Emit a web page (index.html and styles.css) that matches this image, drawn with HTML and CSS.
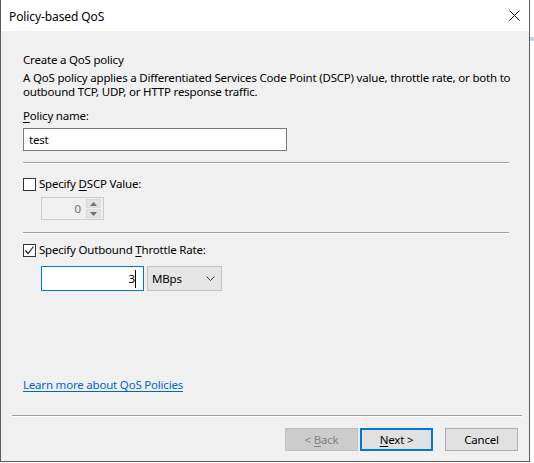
FILE: index.html
```html
<!DOCTYPE html>
<html>
<head>
<meta charset="utf-8">
<link rel="stylesheet" href="styles.css">
</head>
<body>
<div class="screen">
  <div class="window">
    <div class="titlebar">
      <span class="title">Policy-based QoS</span>
      <svg class="close" width="11" height="11" viewBox="0 0 11 11"><path d="M0.5 0.5 L10.5 10.5 M10.5 0.5 L0.5 10.5" stroke="#000" stroke-width="1" fill="none"/></svg>
    </div>
    <div class="body">
      <div class="page">
        <div class="heading">Create a QoS policy</div>
        <div class="desc">A QoS policy applies a Differentiated Services Code Point (DSCP) value, throttle rate, or both to<br>outbound TCP, UDP, or HTTP response traffic.</div>
        <div class="label"><u>P</u>olicy name:</div>
        <div class="textbox name-box">test</div>
        <div class="sep"></div>
        <div class="check-row first">
          <span class="checkbox"></span>
          <span class="check-label">Specify <u>D</u>SCP Value:</span>
        </div>
        <div class="spin">
          <span class="spin-value">0</span>
          <span class="spin-buttons">
            <span class="spin-btn"><svg width="7" height="4" viewBox="0 0 7 4"><path d="M0 4 L3.5 0 L7 4 Z" fill="#6d6d6d"/></svg></span>
            <span class="spin-btn"><svg width="7" height="4" viewBox="0 0 7 4"><path d="M0 0 L3.5 4 L7 0 Z" fill="#6d6d6d"/></svg></span>
          </span>
        </div>
        <div class="sep second"></div>
        <div class="check-row">
          <span class="checkbox"><svg width="11" height="11" viewBox="0 0 11 11"><path d="M1.5 5.5 L4 8.5 L9.5 1.5" stroke="#222" stroke-width="1.2" fill="none"/></svg></span>
          <span class="check-label">Specify Outbound <u>T</u>hrottle Rate:</span>
        </div>
        <div class="rate-row">
          <div class="textbox rate-box focused"><span class="rate-value">3</span><span class="caret"></span></div>
          <div class="select"><span>MBps</span><svg width="9" height="5" viewBox="0 0 9 5"><path d="M0.5 0.5 L4.5 4.5 L8.5 0.5" stroke="#333" stroke-width="1" fill="none"/></svg></div>
        </div>
        <a class="link">Learn more about QoS Policies</a>
      </div>
      <div class="footer">
        <div class="sep wide"></div>
        <div class="buttons">
          <button class="btn disabled">&lt; <u>B</u>ack</button>
          <button class="btn default"><u>N</u>ext &gt;</button>
          <button class="btn cancel">Cancel</button>
        </div>
      </div>
    </div>
  </div>
  <div class="behind"><div class="behind-bar"></div></div>
</div>
</body>
</html>
```
FILE: styles.css
```css
* { box-sizing: border-box; }
html, body { margin: 0; padding: 0; background: #ffffff; }
body {
  font-family: "Noto Sans", "Open Sans", sans-serif;
  font-size: 11.5px;
  letter-spacing: -0.2px;
  color: #000;
}
.screen { display: flex; width: 534px; height: 463px; overflow: hidden; }
.window {
  width: 530px;
  height: 462px;
  border-left: 1px solid #5c5c5c;
  border-right: 1px solid #5c5c5c;
  border-bottom: 1px solid #5c5c5c;
  display: flex;
  flex-direction: column;
  flex-shrink: 0;
}
.titlebar {
  height: 31px;
  background: #fff;
  display: flex;
  align-items: center;
  padding-left: 8px;
  padding-right: 9px;
}
.title { flex: 1; line-height: 15px; padding-top: 1px; font-size: 12px; letter-spacing: -0.1px; }
.close { display: block; }
.body {
  flex: 1;
  background: #f0f0f0;
  display: flex;
  flex-direction: column;
}
.page {
  flex: 1;
  display: flex;
  flex-direction: column;
  align-items: flex-start;
  padding: 21px 0 23px 22px;
}
.heading { line-height: 15px; }
.desc { line-height: 14px; margin-top: 4px; white-space: nowrap; }
.label { line-height: 15px; margin-top: 9px; }
u { text-decoration: underline; text-underline-offset: 2px; }
.textbox {
  background: #fff;
  border: 1px solid #7a7a7a;
  line-height: 15px;
}
.name-box {
  width: 264px;
  height: 23px;
  margin-top: 5px;
  padding: 3px 5px;
}
.sep {
  width: 486px;
  height: 2px;
  border-top: 1px solid #a0a0a0;
  border-bottom: 1px solid #ffffff;
  margin-top: 11px;
  flex-shrink: 0;
}
.sep.second { margin-top: 12px; }
.check-row {
  display: flex;
  align-items: flex-start;
  line-height: 15px;
  margin-top: 8px;
}
.check-row.first { margin-top: 12px; }
.checkbox {
  width: 13px;
  height: 13px;
  border: 1px solid #333;
  background: #fff;
  margin-top: 2px;
  margin-right: 3px;
  display: flex;
}
.checkbox svg { display: block; }
.spin {
  margin-top: 6px;
  margin-left: 18px;
  width: 63px;
  height: 23px;
  border: 1px solid #cccccc;
  background: #f0f0f0;
  display: flex;
  padding: 1px;
}
.spin-value {
  flex: 1;
  text-align: right;
  color: #6d6d6d;
  line-height: 19px;
  padding-right: 5px;
}
.spin-buttons {
  width: 16px;
  display: flex;
  flex-direction: column;
  gap: 1px;
  padding-right: 1px;
}
.spin-btn {
  flex: 1;
  background: #e3e3e3;
  border: 1px solid #d9d9d9;
  display: flex;
  align-items: center;
  justify-content: center;
}
.spin-btn svg { display: block; }
.rate-row {
  display: flex;
  gap: 3px;
  margin-top: 9px;
  margin-left: 18px;
}
.rate-box {
  width: 103px;
  height: 25px;
  display: flex;
  justify-content: flex-end;
  align-items: center;
  padding-right: 7px;
}
.focused { border-color: #0078d7; }
.caret {
  width: 1px;
  height: 18px;
  background: #000;
}
.select {
  width: 75px;
  height: 25px;
  border: 1px solid #c4c4c4;
  background: #e5e5e5;
  display: flex;
  align-items: center;
  justify-content: space-between;
  padding: 0 6px 0 4px;
  line-height: 15px;
}
.select svg { display: block; }
.link {
  margin-top: auto;
  line-height: 15px;
  color: #0066cc;
  text-decoration: underline;
  text-underline-offset: 2px;
}
.footer {
  padding: 0 11px 10px 11px;
}
.sep.wide { width: 510px; margin-top: 0; }
.buttons {
  display: flex;
  justify-content: flex-end;
  margin-top: 11px;
}
.btn {
  font-family: inherit;
  font-size: 11.5px;
  letter-spacing: -0.2px;
  width: 73px;
  height: 23px;
  padding: 0;
  margin: 0;
  line-height: 15px;
  background: #e1e1e1;
  border: 1px solid #adadad;
  color: #000;
}
.btn.disabled {
  background: #cccccc;
  border-color: #bfbfbf;
  color: #838383;
  margin-right: 2px;
}
.btn.default {
  border: 2px solid #0078d7;
  margin-right: 12px;
}
.behind {
  flex: 1;
  background: #fff;
  padding-top: 37px;
}
.behind-bar { height: 4px; background: #c9d3dc; }
```
